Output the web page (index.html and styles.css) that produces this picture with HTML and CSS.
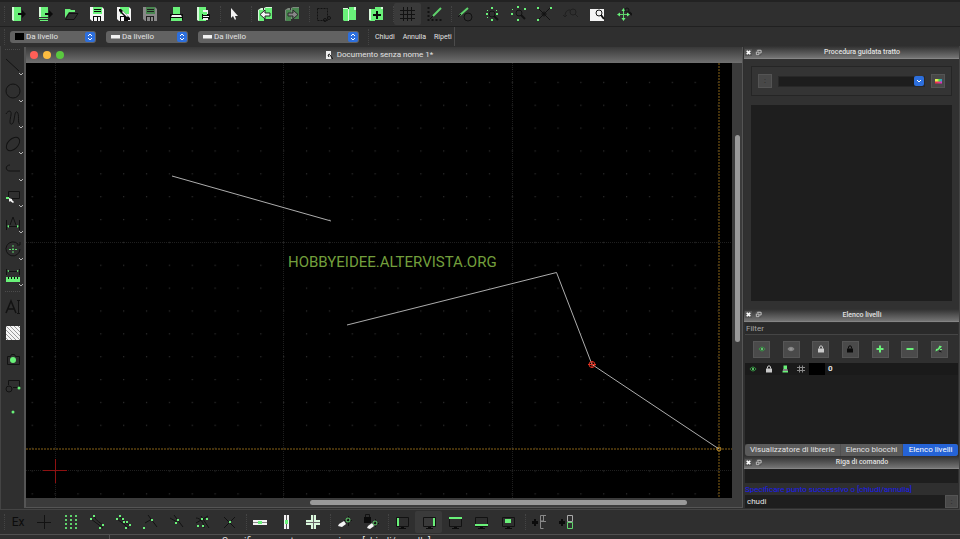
FILE: index.html
```html
<!DOCTYPE html>
<html lang="it">
<head>
<meta charset="utf-8">
<title>Documento senza nome 1</title>
<link rel="stylesheet" href="styles.css">
</head>
<body>
<svg class="defs" aria-hidden="true">
  <symbol id="new" viewBox="0 0 16 16"><path class="g" d="M2 1h9v14H4l-2-1z"/><path class="pale" d="M2 1h2v14l-2-1z"/><path class="k" d="M8 7h4V4l4 4-4 4V9H8z"/></symbol>
  <symbol id="newtpl" viewBox="0 0 16 16"><path class="g" d="M2 1h9v10H2zM2 12h9v1H2zM3 14h8v1H3z"/><path class="pale" d="M2 1h2v10H2z"/><path class="k" d="M8 7h4V4l4 4-4 4V9H8z"/></symbol>
  <symbol id="open" viewBox="0 0 16 16"><path class="g" d="M2 3h5l1 1h4v2H6l-4 6z"/><path class="ks" d="M2.500 13.500 6 7.500h9l-4 6z"/></symbol>
  <symbol id="save" viewBox="0 0 16 16"><path class="w" d="M1 1h12l2 2v12H3l-2-2z"/><path class="g" d="M4 1h9v7H4z"/><path class="k" d="M5 3h7v1H5zM5 5h7v1H5zM4 10h8v5H4z"/><path class="w" d="M5 11h3v4H5zM9 11h2v4H9z"/></symbol>
  <symbol id="saveas" viewBox="0 0 16 16"><path class="w" d="M1 1h12l2 2v12H3l-2-2z"/><path class="g" d="M4 1h9v7H4z"/><path class="k" d="M4 10h8v5H4zM3 3h2l9 9v2h-2L3 5z"/><path class="w" d="M5 11h3v4H5zM7 5l5 5-1 1-5-5z"/></symbol>
  <symbol id="print" viewBox="0 0 16 16"><path class="g" d="M5 1h7v8H5z"/><path class="k" d="M2 8h13v6H2z"/><path class="w" d="M4 9h9l1 2H3z"/><path class="g" d="M3 12h11v3H3z"/></symbol>
  <symbol id="preview" viewBox="0 0 16 16"><path class="g" d="M2 1h9v14H4l-2-1z"/><path class="pale" d="M2 1h2v14l-2-1z"/><path class="w" d="M8 4h5v5H8z"/><path class="k" d="M7 8h8v5H7z"/><path class="g" d="M8 6h4v3H8z"/><path class="w" d="M8 10h6v1H8zM8 12h5v2H8z"/></symbol>
  <symbol id="arrow" viewBox="0 0 16 16"><path class="w" d="M5 2v10l2-2 2 4 1-1-1-3h3z"/></symbol>
  <symbol id="undo" viewBox="0 0 16 16"><path class="pale" d="M1 4l3-2h2v12H3l-2 1zM7 2l2-1h6v12H7z"/><path class="g" d="M2 4h5v11H2zM8 2h7v11H8z"/><path class="w kline" d="M3 8.500 8 4v3h5v3H8v3z"/></symbol>
  <symbol id="redo" viewBox="0 0 16 16"><path class="pale" d="M1 4l3-2h2v12H3l-2 1zM7 2l2-1h6v12H7z"/><path class="g" d="M2 4h5v11H2zM8 2h7v11H8z"/><path class="w kline" d="M14 8.500 9 4v3H4v3h5v3z"/></symbol>
  <symbol id="cut" viewBox="0 0 16 16"><path class="ks" stroke-dasharray="2 1" d="M2.500 2.500h10v12h-10z"/><circle class="ks" cx="10" cy="14" r="1.500"/><circle class="ks" cx="14" cy="12" r="1.500"/></symbol>
  <symbol id="copy" viewBox="0 0 16 16"><path class="g" d="M8 1h7v13H8zM2 3h6v12H3l-1-1z"/><path class="pale" d="M2 2h5v1H2zM13 1h2v3h-2zM7 3h1v12H7z"/></symbol>
  <symbol id="paste" viewBox="0 0 16 16"><path class="g" d="M7 1h8v13H7zM1 3h6v12H2l-1-1z"/><path class="pale" d="M1 3h2v11H1zM13 1h2v2h-2z"/><path class="k" d="M8 5h2v3h3v2h-3v3H8v-3H5V8h3z"/></symbol>
  <symbol id="grid" viewBox="0 0 16 16"><path class="ks" d="M4.500 1v14M8.500 1v14M12.500 1v14M1 4.500h15M1 8.500h15M1 12.500h15"/></symbol>
  <symbol id="draft" viewBox="0 0 16 16"><path class="ks" stroke-width="2" stroke-dasharray="2 2" d="M2.500 1v13h14"/><path class="gs" stroke-width="2" d="m7 10 8-8"/><path class="ks" d="m4 13 3-3"/></symbol>
  <symbol id="redraw" viewBox="0 0 16 16"><path class="gs" stroke-width="2" d="m3 9 8-7"/><path class="ks" d="m1 11 3-3"/><circle class="ks" cx="11" cy="11" r="4"/></symbol>
  <symbol id="auto" viewBox="0 0 16 16"><circle class="ks" cx="8" cy="8" r="3"/><path class="ks" stroke-width="2" d="m10 10 4 4"/><path class="g" d="M7 1h2v2H7zM2 7h2v2H2zM12 7h2v2h-2zM7 13h2v2H7zM3 4h1v1H3zM12 4h1v1h-1zM3 11h1v1H3z"/></symbol>
  <symbol id="zoomsel" viewBox="0 0 16 16"><circle class="ks" cx="9" cy="7" r="3"/><path class="ks" stroke-width="2" d="m11 9 4 4"/><path class="g" d="M7 0h2v2H7zM1 7h2v2H1zM14 2h2v2h-2zM7 13h2v2H7zM2 3h1v1H2z"/></symbol>
  <symbol id="zoomfit" viewBox="0 0 16 16"><path class="ks" d="m2 2 12 12M14 2 2 14"/><circle class="ks" cx="8" cy="8" r="2"/><path class="g" d="M1 1h2v2H1zM14 1h2v2h-2zM1 13h2v2H1z"/></symbol>
  <symbol id="zoomprev" viewBox="0 0 16 16"><g opacity="0.500"><circle class="ks" cx="10" cy="6" r="3"/><path class="ks" d="m12 8 3 3M7 4C3 4 2 7 2 11M0 9l2 2 2-2"/></g></symbol>
  <symbol id="zoomwin" viewBox="0 0 16 16"><path class="w" d="M1 3h14v12H1z"/><circle class="ks" cx="10" cy="7" r="3"/><path class="ks" stroke-width="2" d="m12 9 3 4"/></symbol>
  <symbol id="pan" viewBox="0 0 16 16"><path class="gs" d="M7.500 3v11M2 8.500h11"/><path class="g" d="m7.500 2 2 3h-4zM7.500 15l2-3h-4zM1 8.500l3-2v4zM14 8.500l-3-2v4z"/><circle class="ks" cx="11" cy="4" r="2"/><path class="ks" stroke-width="2" d="m13 6 3 3"/></symbol>
  <symbol id="line" viewBox="0 0 16 16"><path class="ks" d="m1 2 13 12"/></symbol>
  <symbol id="circle" viewBox="0 0 16 16"><circle class="ks" cx="8" cy="8" r="7"/></symbol>
  <symbol id="spline" viewBox="0 0 16 16"><path class="ks" d="M1 4C3 0 7 0 6 5s-2 10 1 9 2-14 5-12 0 12 3 12"/></symbol>
  <symbol id="ellipse" viewBox="0 0 16 16"><ellipse class="ks" cx="8" cy="8" rx="8" ry="5" transform="rotate(-45 8 8)"/></symbol>
  <symbol id="pline" viewBox="0 0 16 16"><path class="ks" d="M5 3C0 3 0 9 5 9h10"/></symbol>
  <symbol id="shape" viewBox="0 0 16 16"><path class="ks" d="M3.500 2.500h11v7h-11z"/><path class="g" d="M1 8h3v2H1z"/><path class="w" d="m4 9 3 1v1l2 2-1 1-3-2-1 1z"/></symbol>
  <symbol id="dim" viewBox="0 0 16 16"><path class="ks" d="M1.500 5v10M14.500 5v10M2 11.500h12M5 10l3-8 3 8"/><path class="g" d="m2 11 2-1v3zM14 11l-2-1v3z"/></symbol>
  <symbol id="modify" viewBox="0 0 16 16"><path class="ks" d="M13 3a7 7 0 1 0 2 5M12 4h3V1"/><path class="gs" stroke-dasharray="2 1" d="M8 4v9M4 8.500h9"/></symbol>
  <symbol id="measure" viewBox="0 0 16 16"><path class="ks" d="M1.500 1v6M14.500 1v6M2 3.500h12"/><path class="g" d="m2 3 2-1v2zM14 3l-2-1v2zM1 9h14v5H1z"/><path class="k" d="M3 9h1v2H3zM6 9h1v2H6zM9 9h1v2H9zM12 9h1v2h-1z"/></symbol>
  <symbol id="text" viewBox="0 0 16 16"><path class="ks" stroke-width="1.500" d="M1 14 6 2l5 12M3 10h6"/><path class="ks" d="M12 1.500h3M13.500 1v14M12 14.500h3"/></symbol>
  <symbol id="hatch" viewBox="0 0 16 16"><path class="w" d="M1 1h14v14H1z"/><path d="M1 1l14 14M5 1l10 10M9 1l6 6M1 5l10 10M1 9l6 6M1 13l2 2M13 1l2 2" stroke="#999" fill="none"/></symbol>
  <symbol id="image" viewBox="0 0 16 16"><path class="ks" d="M2.500 4.500h3l1-2h3l1 2h4v8h-12z"/><circle class="g" cx="8" cy="8" r="3"/></symbol>
  <symbol id="block" viewBox="0 0 16 16"><path class="ks" d="M3.500 2.500h11v7H8M3.500 2.500V7"/><circle class="ks" cx="4" cy="11" r="3"/><circle class="g" cx="14" cy="10" r="1.500"/></symbol>
  <symbol id="point" viewBox="0 0 16 16"><circle class="g" cx="8" cy="8" r="1.500"/></symbol>
  <symbol id="cross" viewBox="0 0 16 16"><path class="ks" d="M8.500 1v14M1 8.500h14"/></symbol>
  <symbol id="dots" viewBox="0 0 16 16"><path class="gs" stroke-width="2" stroke-dasharray="2 2" d="M3 1v14M8 1v14M13 1v14"/></symbol>
  <symbol id="ends" viewBox="0 0 16 16"><path class="ks" d="m2 5 12 9M5 1c1 5 5 7 9 10"/><path class="g" d="M1 4h2v2H1zM4 1h2v2H4zM13 10h2v2h-2zM10 13h2v2h-2z"/></symbol>
  <symbol id="onent" viewBox="0 0 16 16"><path class="ks" d="m2 5 12 9M5 1c1 5 5 7 9 10"/><path class="g" d="M1 4h2v2H1zM4 1h2v2H4zM7 4h2v2H7zM8 7h2v2H8zM11 7h2v2h-2zM14 10h2v2h-2zM10 13h2v2h-2z"/></symbol>
  <symbol id="perp" viewBox="0 0 16 16"><path class="ks" d="m6 1 9 12M3 9l7-4"/><path class="g" d="M9 5h2v2H9zM1 13h2v2H1z"/></symbol>
  <symbol id="mid" viewBox="0 0 16 16"><path class="ks" d="m6 1 9 12M2 4l7 4"/><path class="g" d="M9 5h2v2H9zM7 8h2v2H7z"/></symbol>
  <symbol id="inter" viewBox="0 0 16 16"><path class="ks" d="m7 2 8 12M2 9l12-7M2 4c4 0 8 4 8 10"/><path class="g" d="M7 4h2v2H7zM12 4h2v2h-2zM3 11h2v2H3zM8 11h2v2H8z"/></symbol>
  <symbol id="xint" viewBox="0 0 16 16"><path class="ks" d="m3 3 11 11M14 3 3 14"/><path class="g" d="M8 7h2v2H8z"/></symbol>
  <symbol id="hbar" viewBox="0 0 16 16"><path class="w" d="M1 6h14v5H1z"/><path fill="#888" d="M1 8h14v1H1z"/><path class="g" d="M6 7h4v3H6z"/></symbol>
  <symbol id="vbar" viewBox="0 0 16 16"><path class="w" d="M6 1h5v14H6z"/><path fill="#555" d="M8 1h1v14H8z"/><path class="g" d="M7 6h3v4H7z"/></symbol>
  <symbol id="plusbar" viewBox="0 0 16 16"><path class="pale" d="M6 1h5v5h4v5h-4v4H6v-4H1V6h5z"/><path fill="#666" d="M8 1h1v14H8zM1 8h14v1H1z"/></symbol>
  <symbol id="relzero" viewBox="0 0 16 16"><path class="ks" d="M12.500 2v10M8 6.500h8"/><circle class="gs" cx="12" cy="6" r="2"/><path class="w" d="m3 10 5-3 2 3-4 3-4-1z"/></symbol>
  <symbol id="relock" viewBox="0 0 16 16"><path class="k" d="M1 3h7v6H1z"/><path class="ks" d="M2.500 3V.5h4V3M12.500 5v8M8 9.500h8"/><circle class="gs" cx="12" cy="9" r="2"/><path class="w" d="m5 12 4-3 2 3-4 3-3-1z"/></symbol>
  <symbol id="monitor" viewBox="0 0 16 16"><path class="ks" d="M2.500 3.500h12v9h-12z"/><path class="k" d="M7 13h3v1h2v1H5v-1h2z"/></symbol>
  <symbol id="mleft" viewBox="0 0 16 16"><use href="#monitor"/><path class="g" d="M3 4h2v8H3z"/></symbol>
  <symbol id="mright" viewBox="0 0 16 16"><use href="#monitor"/><path class="g" d="M12 4h2v8h-2z"/></symbol>
  <symbol id="mtop" viewBox="0 0 16 16"><use href="#monitor"/><path class="g" d="M2 3h13v2H2z"/></symbol>
  <symbol id="mbottom" viewBox="0 0 16 16"><use href="#monitor"/><path class="g" d="M2 10h13v2H2z"/></symbol>
  <symbol id="mfloat" viewBox="0 0 16 16"><use href="#monitor"/><path class="g" d="M5 5h6v4H5z"/></symbol>
  <symbol id="addf" viewBox="0 0 16 16"><path class="k" d="M3 5h2v2h2v3H5v2H3v-2H1V7h2z"/><path fill="none" stroke="#888" d="M15 1.500H9.500v13h3M12.500 1v6H10M15 7.500h-5"/></symbol>
  <symbol id="addb" viewBox="0 0 16 16"><path class="k" d="M3 5h2v2h2v3H5v2H3v-2H1V7h2z"/><path fill="none" stroke="#aaa" d="M9.500 1.500h5v6h-5z"/><path class="gs" d="M9.500 8.500h5v6h-5z"/></symbol>
  <symbol id="eye" viewBox="0 0 16 16"><path fill="none" stroke="#379b44" stroke-width="2" d="M2 8c3-5 9-5 12 0-3 5-9 5-12 0z"/><circle class="g" cx="8" cy="8" r="2"/></symbol>
  <symbol id="eyeoff" viewBox="0 0 16 16"><path fill="#858585" d="M1 8c4-6 10-6 14 0-4 6-10 6-14 0z"/><circle cx="8" cy="8" r="2" fill="#999"/></symbol>
  <symbol id="lock" viewBox="0 0 16 16"><path fill="currentColor" d="M2 7h12v8H2z"/><path fill="none" stroke="currentColor" stroke-width="2" d="M5 7V4c0-3 6-3 6 0v3"/></symbol>
  <symbol id="plus" viewBox="0 0 16 16"><path class="g" d="M6 1h4v5h5v4h-5v5H6v-5H1V6h5z"/></symbol>
  <symbol id="minus" viewBox="0 0 16 16"><path class="g" d="M1 6h14v4H1z"/></symbol>
  <symbol id="edit" viewBox="0 0 16 16"><path class="g" d="m9 1 5 2-7 7-6 3 1-5 4-1zM10 8h4v2h-4z"/><path class="ks" stroke-width="2" d="m8 12 5 2"/></symbol>
  <symbol id="hash" viewBox="0 0 16 16"><path fill="none" stroke="#8b8b8b" stroke-width="2" d="M5 1v14M11 1v14M0 5h16M0 11h16"/></symbol>
  <symbol id="close" viewBox="0 0 8 8"><path fill="#555" d="M0 0h8v8H0z"/><path fill="none" stroke="#fff" stroke-width="2" d="m2 2 4 4M6 2 2 6"/></symbol>
  <symbol id="float" viewBox="0 0 8 8"><circle cx="4" cy="4" r="4" fill="#555"/><path fill="none" stroke="#ccc" d="M1.500 3.500h3v3h-3zM3 2.500V1.500h4v3H5"/></symbol>
  <symbol id="updown" viewBox="0 0 10 10"><rect width="10" height="10" rx="2" fill="#2d6fdd"/><path fill="none" stroke="#fff" d="m3 4 2-2 2 2M3 6l2 2 2-2"/></symbol>
  <symbol id="down" viewBox="0 0 10 10"><rect width="10" height="10" rx="2" fill="#2d6fdd"/><path fill="none" stroke="#fff" d="m3 4 2 2 2-2"/></symbol>
  <symbol id="chev" viewBox="0 0 6 4"><path fill="none" stroke="#b5b5b5" d="m1 1 2 2 2-2"/></symbol>
</svg>

<div class="toolbar top">
  <span class="grip"></span>
  <div class="g8">
    <button aria-label="Nuovo"><svg><use href="#new"/></svg></button>
    <button aria-label="Nuovo da modello"><svg><use href="#newtpl"/></svg></button>
    <button aria-label="Apri"><svg><use href="#open"/></svg></button>
    <button aria-label="Salva"><svg><use href="#save"/></svg></button>
    <button aria-label="Salva con nome"><svg><use href="#saveas"/></svg></button>
    <button aria-label="Salva tutto" class="dim"><svg><use href="#save"/></svg></button>
    <button aria-label="Stampa"><svg><use href="#print"/></svg></button>
    <button aria-label="Anteprima"><svg><use href="#preview"/></svg></button>
  </div>
  <span class="grip"></span>
  <div class="g1"><button aria-label="Selezione"><svg><use href="#arrow"/></svg></button></div>
  <span class="grip"></span>
  <div class="g2">
    <button aria-label="Annulla"><svg><use href="#undo"/></svg></button>
    <button aria-label="Ripeti" class="dim"><svg><use href="#redo"/></svg></button>
  </div>
  <span class="grip"></span>
  <div class="g3">
    <button aria-label="Taglia"><svg><use href="#cut"/></svg></button>
    <button aria-label="Copia"><svg><use href="#copy"/></svg></button>
    <button aria-label="Incolla"><svg><use href="#paste"/></svg></button>
  </div>
  <span class="grip"></span>
  <div class="g2">
    <button aria-label="Griglia" class="on"><svg><use href="#grid"/></svg></button>
    <button aria-label="Bozza"><svg><use href="#draft"/></svg></button>
  </div>
  <span class="grip"></span>
  <div class="g7">
    <button aria-label="Ridisegna"><svg><use href="#redraw"/></svg></button>
    <button aria-label="Zoom automatico"><svg><use href="#auto"/></svg></button>
    <button aria-label="Zoom selezione"><svg><use href="#zoomsel"/></svg></button>
    <button aria-label="Zoom adatta"><svg><use href="#zoomfit"/></svg></button>
    <button aria-label="Zoom precedente"><svg><use href="#zoomprev"/></svg></button>
    <button aria-label="Zoom finestra"><svg><use href="#zoomwin"/></svg></button>
    <button aria-label="Sposta vista"><svg><use href="#pan"/></svg></button>
  </div>
</div>

<div class="props">
  <span class="grip"></span>
  <label class="combo narrow"><span class="swatch"></span><select aria-label="Colore"><option>Da livello</option></select><svg><use href="#updown"/></svg></label>
  <label class="combo mid"><span class="stroke"></span><select aria-label="Spessore"><option>Da livello</option></select><svg><use href="#updown"/></svg></label>
  <label class="combo wide"><span class="stroke"></span><select aria-label="Tipo linea"><option>Da livello</option></select><svg><use href="#updown"/></svg></label>
  <span class="grip"></span>
  <div class="commands"><button>Chiudi</button><button>Annulla</button><button>Ripeti</button></div>
</div>

<main>
  <nav class="tools">
    <span class="hgrip"></span>
    <div class="stack nine">
      <button aria-label="Linea"><svg><use href="#line"/></svg><svg class="chev"><use href="#chev"/></svg></button>
      <button aria-label="Cerchio"><svg><use href="#circle"/></svg><svg class="chev"><use href="#chev"/></svg></button>
      <button aria-label="Spline"><svg><use href="#spline"/></svg><svg class="chev"><use href="#chev"/></svg></button>
      <button aria-label="Ellisse"><svg><use href="#ellipse"/></svg><svg class="chev"><use href="#chev"/></svg></button>
      <button aria-label="Polilinea"><svg><use href="#pline"/></svg><svg class="chev"><use href="#chev"/></svg></button>
      <button aria-label="Forma"><svg><use href="#shape"/></svg><svg class="chev"><use href="#chev"/></svg></button>
      <button aria-label="Quota"><svg><use href="#dim"/></svg><svg class="chev"><use href="#chev"/></svg></button>
      <button aria-label="Modifica"><svg><use href="#modify"/></svg><svg class="chev"><use href="#chev"/></svg></button>
      <button aria-label="Misura"><svg><use href="#measure"/></svg><svg class="chev"><use href="#chev"/></svg></button>
    </div>
    <span class="hgrip"></span>
    <div class="stack five">
      <button aria-label="Testo"><svg><use href="#text"/></svg></button>
      <button aria-label="Tratteggio"><svg><use href="#hatch"/></svg></button>
      <button aria-label="Immagine"><svg><use href="#image"/></svg></button>
      <button aria-label="Blocco"><svg><use href="#block"/></svg></button>
      <button aria-label="Punto"><svg><use href="#point"/></svg></button>
    </div>
  </nav>

  <section class="document">
    <header>
      <span class="lights"><i class="red"></i><i class="yellow"></i><i class="green"></i></span>
      <h1><svg viewBox="0 0 8 8"><path fill="#eee" d="M1 0h5v8H1z"/><path fill="none" stroke="#111" d="M5 3 3 4l1 2M5 4l3 4"/></svg>Documento senza nome 1*</h1>
    </header>
    <svg class="canvas">
      <defs>
        <pattern id="gd" width="22.860" height="22.860" x="28.500" y="18.800" patternUnits="userSpaceOnUse"><rect width="1.200" height="1.200" fill="#303030"/></pattern>
      </defs>
      <rect width="100%" height="100%" fill="url(#gd)"/>
      <path class="major" d="M29.500 0v436M257.500 0v436M486.500 0v436M0 179.500h706M0 407.500h706"/>
      <path class="cursor" d="M693 0v436M0 386h706"/>
      <path class="origin" d="M17 407.500h24M29.500 396v24"/>
      <path class="entity" d="M146 113 305 158M321 262 530.500 209.500 566 301.500 693 386"/>
      <g class="snap"><circle cx="566" cy="301.500" r="3"/><path d="M562 301.500h8M566 298v7"/></g>
      <circle class="hit" cx="693" cy="386" r="2"/>
      <text x="262" y="204">HOBBYEIDEE.ALTERVISTA.ORG</text>
    </svg>
    <div class="vscroll"><i></i></div>
    <div class="hscroll"><i></i></div>
  </section>

  <aside>
    <h2><svg><use href="#close"/></svg><svg><use href="#float"/></svg><span>Procedura guidata tratto</span></h2>
    <div class="wizard">
      <div class="pick">
        <button aria-label="Opzioni" class="sq faint">:</button>
        <label class="search"><select aria-label="Pennello"></select><svg><use href="#down"/></svg></label>
        <button aria-label="Tavolozza" class="sq"><i class="rainbow"></i></button>
      </div>
      <div class="well"></div>
    </div>
    <h2><svg><use href="#close"/></svg><svg><use href="#float"/></svg><span>Elenco livelli</span></h2>
    <div class="layers">
      <input class="filter" aria-label="Filtro" placeholder="Filter">
      <div class="actions">
        <button aria-label="Mostra"><svg><use href="#eye"/></svg></button>
        <button aria-label="Nascondi"><svg><use href="#eyeoff"/></svg></button>
        <button aria-label="Sblocca"><svg class="grey"><use href="#lock"/></svg></button>
        <button aria-label="Blocca"><svg class="black"><use href="#lock"/></svg></button>
        <button aria-label="Aggiungi"><svg><use href="#plus"/></svg></button>
        <button aria-label="Rimuovi"><svg><use href="#minus"/></svg></button>
        <button aria-label="Modifica"><svg><use href="#edit"/></svg></button>
      </div>
      <div class="list">
        <table><tr>
          <td><svg><use href="#eye"/></svg></td>
          <td><svg class="grey"><use href="#lock"/></svg></td>
          <td><svg><use href="#print"/></svg></td>
          <td><svg><use href="#hash"/></svg></td>
          <td class="colour"></td>
          <td class="name">0</td>
        </tr></table>
      </div>
      <div class="tabs"><button>Visualizzatore di librerie</button><button>Elenco blocchi</button><button class="current">Elenco livelli</button></div>
    </div>
    <h2><svg><use href="#close"/></svg><svg><use href="#float"/></svg><span>Riga di comando</span></h2>
    <div class="console">
      <div class="log"></div>
      <label for="cmd">Specificare punto successivo o [chiudi/annulla]</label>
      <div class="entry"><input id="cmd" value="chudi"><button aria-label="Cronologia">:</button></div>
    </div>
  </aside>
</main>

<div class="toolbar bottom">
  <span class="grip"></span>
  <div class="g9">
    <button class="ex">Ex</button>
    <button aria-label="Libero"><svg><use href="#cross"/></svg></button>
    <button aria-label="Griglia"><svg><use href="#dots"/></svg></button>
    <button aria-label="Estremi"><svg><use href="#ends"/></svg></button>
    <button aria-label="Su entità"><svg><use href="#onent"/></svg></button>
    <button aria-label="Perpendicolare"><svg><use href="#perp"/></svg></button>
    <button aria-label="Medio"><svg><use href="#mid"/></svg></button>
    <button aria-label="Distanza"><svg><use href="#inter"/></svg></button>
    <button aria-label="Intersezione"><svg><use href="#xint"/></svg></button>
  </div>
  <span class="grip"></span>
  <div class="g3">
    <button aria-label="Orizzontale"><svg><use href="#hbar"/></svg></button>
    <button aria-label="Verticale"><svg><use href="#vbar"/></svg></button>
    <button aria-label="Ortogonale"><svg><use href="#plusbar"/></svg></button>
  </div>
  <span class="grip"></span>
  <div class="g2">
    <button aria-label="Zero relativo"><svg><use href="#relzero"/></svg></button>
    <button aria-label="Blocca zero"><svg><use href="#relock"/></svg></button>
  </div>
  <span class="grip"></span>
  <div class="g5">
    <button aria-label="Pannello sinistro"><svg><use href="#mleft"/></svg></button>
    <button aria-label="Pannello destro" class="on"><svg><use href="#mright"/></svg></button>
    <button aria-label="Pannello alto"><svg><use href="#mtop"/></svg></button>
    <button aria-label="Pannello basso"><svg><use href="#mbottom"/></svg></button>
    <button aria-label="Pannello mobile"><svg><use href="#mfloat"/></svg></button>
  </div>
  <span class="grip"></span>
  <div class="g2">
    <button aria-label="Aggiungi vista"><svg><use href="#addf"/></svg></button>
    <button aria-label="Aggiungi blocco"><svg><use href="#addb"/></svg></button>
  </div>
</div>
<footer><span></span><p>Specificare punto successivo o [chiudi/annulla]</p></footer>
</body>
</html>
```
FILE: styles.css
```css
* { box-sizing: border-box; }
body {
  margin: 0;
  height: 100vh;
  overflow: hidden;
  display: flex;
  flex-direction: column;
  background: #2f2f2f;
  color: #e2e2e2;
  font: 8px/10px Roboto, "Liberation Sans", sans-serif;
}
button, input, select {
  margin: 0;
  padding: 0;
  border: 0;
  background: none;
  color: inherit;
  font: inherit;
  appearance: none;
  outline: 0;
}
svg { display: block; flex: none; }
.defs { width: 0; height: 0; position: absolute; }
.g { fill: #69f179; }
.pale { fill: #d9f8dc; }
.w { fill: #f4f4f4; }
.k { fill: #0b0b0b; }
.ks { fill: none; stroke: #121212; }
.gs { fill: none; stroke: #5fd36c; }
.kline { stroke: #222; }

.toolbar { display: flex; flex: none; align-items: center; }
.toolbar > div { display: flex; flex: none; height: 100%; align-items: center; }
.toolbar button { flex: 1; height: 22px; display: flex; align-items: center; justify-content: center; }
.toolbar svg { width: 16px; height: 16px; }
.toolbar .dim { opacity: 0.45; }
.toolbar .on { background: #3a3a3a; border-radius: 2px; }
.top { height: 27px; border-top: 2px solid #222; border-bottom: 1px solid #202020; }
.bottom { height: 25px; border-top: 1px solid #444; }
.g1 { width: 26px; }
.g2 { width: 53px; }
.g3 { width: 79px; }
.g5 { width: 132px; }
.g7 { width: 185px; }
.g8 { width: 211px; }
.g9 { width: 237px; }
.grip { width: 5px; height: 16px; flex: none; border-right: 1px dotted #444; }
.toolbar .ex { color: #0c0c0c; font-size: 12px; }

.props { display: flex; flex: none; height: 19px; align-items: center; }
.combo {
  display: flex;
  align-items: center;
  height: 12px;
  margin-right: 10px;
  padding: 0 1px 0 5px;
  gap: 2px;
  border-radius: 3px;
  background: #626262;
}
.props .grip:first-child { margin-right: 5px; }
.combo select { flex: 1; min-width: 0; height: 12px; }
.combo svg { width: 10px; height: 10px; }
.narrow { width: 86px; }
.mid { width: 82px; }
.wide { width: 161px; margin-right: 5px; }
.swatch { width: 9px; height: 7px; background: #000; }
.stroke { width: 9px; height: 4px; background: #f2f2f2; border-bottom: 1px solid #aaa; }
.commands { display: flex; align-self: stretch; gap: 8px; margin-left: 6px; padding: 1px 2px 0 0; border-right: 1px solid #4b4b4b; font-size: 7px; }

main { flex: 1; min-height: 0; display: flex; }
.tools { width: 24px; flex: none; border-left: 1px solid #444; padding-top: 3px; }
.hgrip { display: block; height: 3px; margin: 0 4px; border-top: 1px dotted #4c4c4c; }
.stack { display: flex; flex-direction: column; }
.nine { height: 237px; margin-bottom: 2px; }
.five { height: 131px; }
.stack button { flex: 1; position: relative; padding-left: 4px; display: flex; align-items: center; }
.stack svg { width: 16px; height: 16px; }
.stack .chev { position: absolute; right: 0; bottom: 2px; width: 6px; height: 4px; }

.document {
  flex: 1;
  min-width: 0;
  display: grid;
  grid-template: 16px 1fr 9px / 1fr 10px;
  border: 1px solid #555;
  border-width: 0 1px 1px 2px;
  margin: 1px 0 1px;
  background: #3b3b3b;
}
.document header { grid-column: 1 / 3; display: grid; grid-template-columns: 1fr auto 1fr; align-items: center; background: linear-gradient(#383838, #707070); }
.lights { display: flex; gap: 5px; padding-left: 4px; }
.lights i { width: 8px; height: 8px; border-radius: 50%; }
.red { background: #ff5f57; }
.yellow { background: #fdbc40; }
.green { background: #5ac83f; }
h1 { margin: 0; padding-right: 10px; display: flex; align-items: center; gap: 4px; font-size: 8px; font-weight: 400; }
h1 svg { width: 8px; height: 8px; }
.canvas { width: 100%; height: 100%; background: #000; }
.major { stroke: #1f1f1f; stroke-dasharray: 1 1; fill: none; }
.cursor { stroke: #886316; stroke-dasharray: 2 1; fill: none; }
.origin { stroke: #8e1111; fill: none; }
.entity { stroke: #adadad; fill: none; }
.snap { stroke: #e03222; fill: none; }
.hit { stroke: #b98a2a; fill: none; }
.canvas text { fill: #739f3c; font: 15px Roboto, sans-serif; }
.vscroll { display: flex; flex-direction: column; align-items: center; }
.vscroll::before { content: ""; flex: 72; }
.vscroll i { flex: 208; width: 5px; border-radius: 3px; background: #999; }
.vscroll::after { content: ""; flex: 156; }
.hscroll { display: flex; align-items: center; }
.hscroll::before { content: ""; flex: 284; }
.hscroll i { flex: 377; height: 5px; border-radius: 3px; background: #999; }
.hscroll::after { content: ""; flex: 45; }

aside { width: 217px; flex: none; display: flex; flex-direction: column; padding-left: 1px; border-right: 1px solid #444; }
h2 { flex: none; height: 13px; margin: 0; padding-left: 1px; display: flex; align-items: center; gap: 3px; background: linear-gradient(#303030, #747474); border-bottom: 1px solid #858585; font-size: 7px; font-weight: 500; }
h2 svg { width: 7px; height: 7px; }
h2 span { flex: 1; text-align: center; }
.wizard { flex: 236 0 0; min-height: 0; display: flex; flex-direction: column; gap: 9px; padding: 7px 7px 8px; background: #313131; }
.pick { height: 30px; flex: none; display: flex; align-items: center; gap: 6px; padding: 0 6px; border: 1px solid #252525; background: #343434; }
.sq { width: 14px; height: 14px; display: grid; place-items: center; background: #484848; border: 1px solid #545454; }
.faint { color: #222; }
.rainbow { width: 7px; height: 5px; background: linear-gradient(90deg, #ee5 30%, #4d4 60%, #38e) top / 100% 50% no-repeat, linear-gradient(90deg, #e33, #d3c) bottom / 100% 50% no-repeat; }
.search { flex: 1; height: 11px; display: flex; align-items: center; background: #1d1d1d; border: 1px solid #282828; }
.search select { flex: 1; min-width: 0; height: 9px; }
.search svg { width: 10px; height: 10px; }
.well { flex: 1; background: #1e1e1e; }
.layers { flex: 134 0 0; min-height: 0; display: flex; flex-direction: column; padding: 1px 1px 0; }
.filter { flex: none; height: 12px; padding: 0 1px; background: #2a2a2a; border-bottom: 1px solid #454545; }
.filter::placeholder { color: #a5a5a5; opacity: 1; }
.actions { flex: none; display: flex; justify-content: space-between; padding: 6px 10px 5px 8px; }
.actions button { width: 17px; height: 17px; display: grid; place-items: center; background: #4a4a4a; border: 1px solid #565656; }
.actions svg { width: 8px; height: 8px; }
.grey { color: #c9c9c9; }
.black { color: #0b0b0b; }
.list { flex: 1; min-height: 0; background: #1e1e1e; }
table { width: 100%; border-collapse: collapse; table-layout: fixed; background: #1a1a1a; }
td { width: 16px; height: 12px; padding: 0; }
td svg { width: 8px; height: 8px; margin: 0 auto; }
.colour { background: #000; }
.name { width: auto; padding-left: 3px; font-weight: 700; }
.tabs { flex: none; height: 12px; display: flex; border-radius: 3px; overflow: hidden; background: #5b5b5b; }
.tabs button { flex: 0 0 auto; padding: 0 5px; border-right: 1px solid #505050; white-space: nowrap; }
.tabs .current { flex: 1; padding: 0; background: #2563d6; color: #fff; border: 0; }
.console { flex: none; height: 40px; padding: 0 1px; }
.log { height: 14px; background: #1e1e1e; }
.console label { display: block; height: 12px; line-height: 13px; color: #1b1bf0; white-space: nowrap; }
.entry { display: flex; height: 13px; }
.entry input { flex: 1; min-width: 0; padding: 0 2px; background: #1e1e1e; }
.entry button { width: 13px; background: #484848; border: 1px solid #545454; color: #222; }

footer { flex: none; height: 5px; display: flex; overflow: hidden; border-top: 1px solid #505050; font-size: 10px; }
footer span { width: 110px; border-right: 1px solid #555; }
footer p { margin: 0 0 0 112px; line-height: 14px; color: #ddd; white-space: nowrap; }
```
